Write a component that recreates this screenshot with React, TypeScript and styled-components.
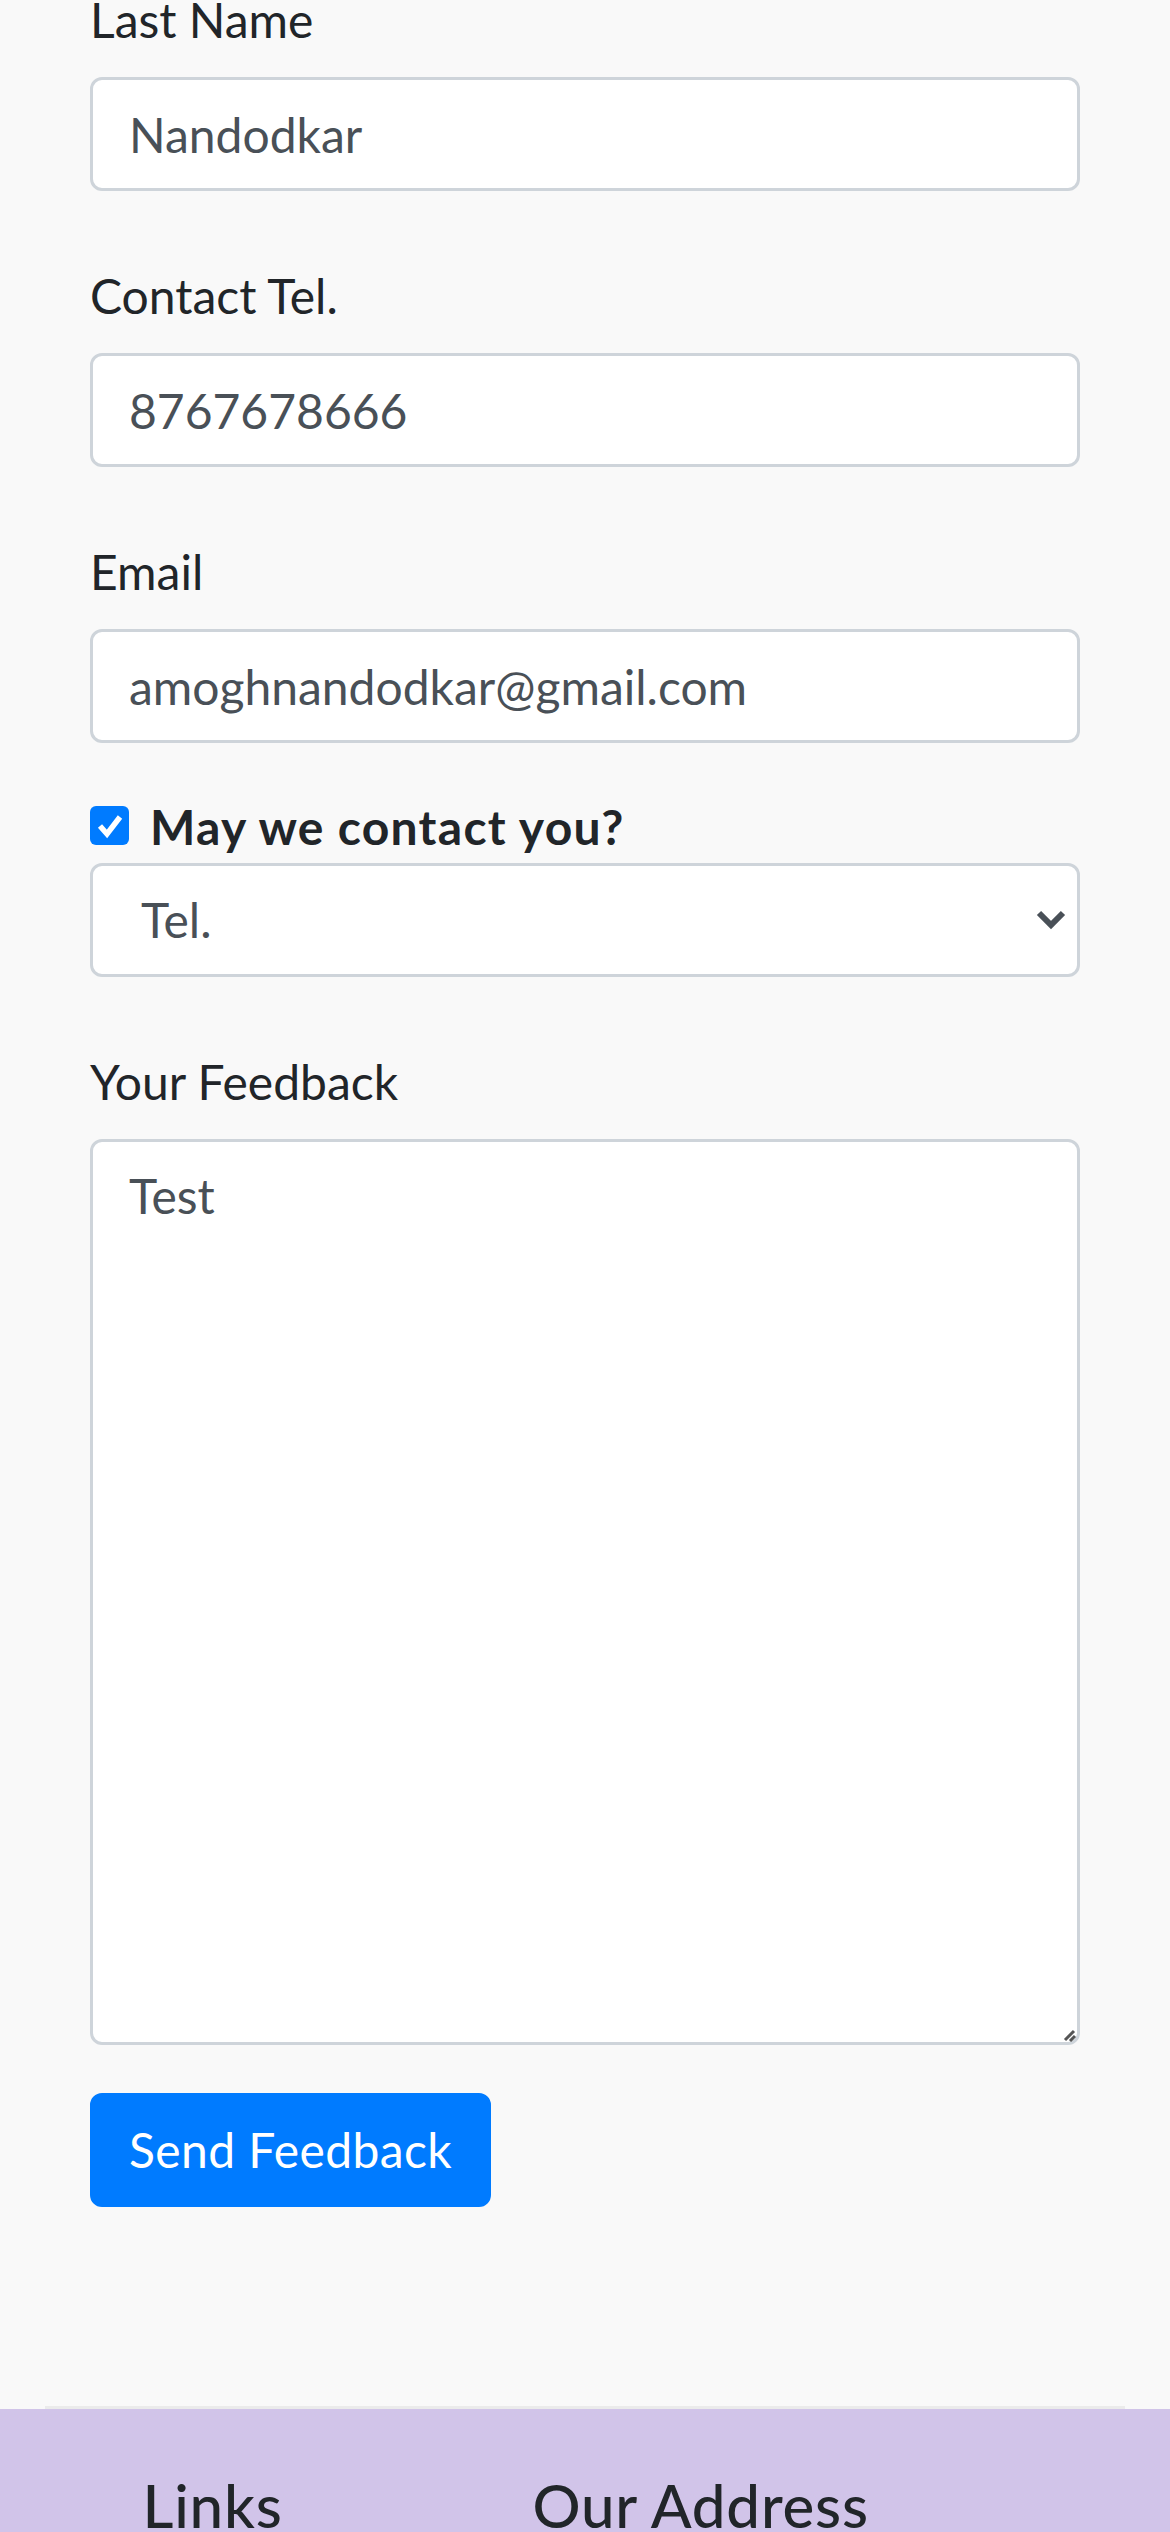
import React from 'react';
import styled, {createGlobalStyle} from 'styled-components';

// the page is a phone screenshot at 3x, so every bootstrap value is tripled here

const GlobalStyle = createGlobalStyle`
  * {
    box-sizing: border-box;
  }
  body {
    margin: 0;
    background: #f9f9f9;
    color: #212529;
    font-family: Lato, "Open Sans", "Noto Sans", sans-serif;
    font-size: 48px;
    line-height: 72px;
  }
`;

const Container = styled.div`
  padding: 0 45px;
`;

// page is scrolled: the "Last Name" label is partly above the top edge
const ContentRow = styled.div`
  margin-top: -37px;
  padding: 0 45px 151px;
  border-bottom: 3px solid #ebebeb;
`;

const FormGroup = styled.div`
  margin-bottom: 48px;
`;

const Label = styled.label`
  display: block;
  padding: 21px 0;
  line-height: 72px;
`;

const controlStyle = `
  display: block;
  width: 100%;
  margin: 0;
  padding: 18px 36px;
  border: 3px solid #ced4da;
  border-radius: 12px;
  background: #fff;
  color: #495057;
  font-family: Lato, "Open Sans", "Noto Sans", sans-serif;
  font-size: 48px;
  line-height: 72px;
  outline: none;
`;

const Input = styled.input`
  ${controlStyle}
  height: 114px;
`;

const CheckRow = styled.div`
  display: flex;
  align-items: flex-start;
  gap: 21px;
`;

const CheckBox = styled.span`
  flex: none;
  display: flex;
  align-items: center;
  justify-content: center;
  width: 39px;
  height: 39px;
  margin-top: 15px;
  border-radius: 6px;
  background: #007bff;
`;

const CheckLabel = styled.label`
  font-weight: 700;
  line-height: 72px;
  letter-spacing: 1.3px;
`;

const SelectWrap = styled.div`
  position: relative;
`;

const Select = styled.select`
  ${controlStyle}
  height: 114px;
  padding-left: 48px;
  appearance: none;
`;

const Chevron = styled.svg`
  position: absolute;
  right: 14px;
  top: 46px;
  pointer-events: none;
`;

const TextareaWrap = styled.div`
  position: relative;
`;

const Textarea = styled.textarea`
  ${controlStyle}
  height: 906px;
  resize: none;
`;

const Grip = styled.svg`
  position: absolute;
  right: 3px;
  bottom: 3px;
  pointer-events: none;
`;

const Button = styled.button`
  display: inline-block;
  padding: 18px 36px;
  border: 3px solid #007bff;
  border-radius: 12px;
  background: #007bff;
  color: #fff;
  font-family: Lato, "Open Sans", "Noto Sans", sans-serif;
  font-size: 48px;
  line-height: 72px;
  letter-spacing: 0.4px;
`;

const Footer = styled.footer`
  background: #d1c4e9;
  padding: 60px 0;
`;

const FooterRow = styled.div`
  display: grid;
  grid-template-columns: 97.5px 390px 1fr;
`;

const FooterCol = styled.div<{$start: number}>`
  grid-column: ${p => p.$start};
  padding: 0 45px;
`;

const FooterTitle = styled.h5`
  margin: 0 0 24px;
  font-size: 60px;
  font-weight: 500;
  line-height: 72px;
  letter-spacing: 0.8px;
`;

const FooterList = styled.ul`
  margin: 0;
  padding: 0;
  list-style: none;
`;

const FooterText = styled.address`
  font-style: normal;
`;

const ContactForm = () => (
  <ContentRow>
    <FormGroup>
      <Label htmlFor="lastname">Last Name</Label>
      <Input id="lastname" defaultValue="Nandodkar" />
    </FormGroup>
    <FormGroup>
      <Label htmlFor="telnum">Contact Tel.</Label>
      <Input id="telnum" type="tel" defaultValue="8767678666" />
    </FormGroup>
    <FormGroup>
      <Label htmlFor="emailid">Email</Label>
      <Input id="emailid" type="email" defaultValue="amoghnandodkar@gmail.com" />
    </FormGroup>
    <FormGroup>
      <CheckRow>
        <CheckBox>
          <svg width="30" height="30" viewBox="0 0 30 30">
            <path d="M5 15 L12 23 L25 6" fill="none" stroke="#fff" strokeWidth="5.5" />
          </svg>
        </CheckBox>
        <CheckLabel>May we contact you?</CheckLabel>
      </CheckRow>
      <SelectWrap>
        <Select defaultValue="Tel.">
          <option>Tel.</option>
          <option>Email</option>
        </Select>
        <Chevron width="30" height="22" viewBox="0 0 30 22">
          <path d="M3 4 L15 16 L27 4" fill="none" stroke="#495057" strokeWidth="6" />
        </Chevron>
      </SelectWrap>
    </FormGroup>
    <FormGroup>
      <Label htmlFor="feedback">Your Feedback</Label>
      <TextareaWrap>
        <Textarea id="feedback" defaultValue="Test" />
        <Grip width="14" height="14" viewBox="0 0 14 14">
          <path d="M2 12 L11 3 M7 13 L12 8" stroke="#555" strokeWidth="3" />
        </Grip>
      </TextareaWrap>
    </FormGroup>
    <FormGroup>
      <Button type="submit">Send Feedback</Button>
    </FormGroup>
  </ContentRow>
);

const App = () => (
  <>
    <GlobalStyle />
    <Container>
      <ContactForm />
    </Container>
    <Footer>
      <FooterRow>
        <FooterCol $start={2}>
          <FooterTitle>Links</FooterTitle>
          <FooterList>
            <li>Home</li>
            <li>About</li>
            <li>Menu</li>
            <li>Contact</li>
          </FooterList>
        </FooterCol>
        <FooterCol $start={3}>
          <FooterTitle>Our Address</FooterTitle>
          <FooterText>
            121, Clear Water Bay Road
            <br />
            Clear Water Bay, Kowloon
          </FooterText>
        </FooterCol>
      </FooterRow>
    </Footer>
  </>
);

export default App;
